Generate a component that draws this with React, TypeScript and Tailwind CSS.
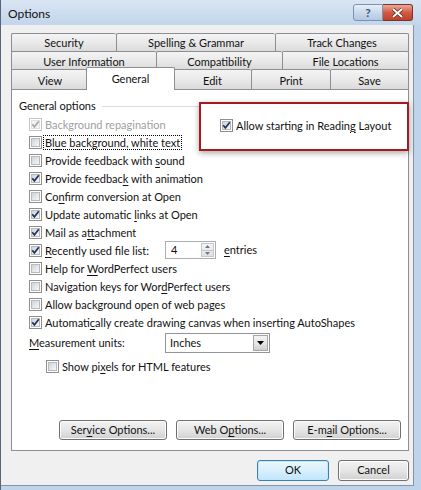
import React from "react";

const U = ({ children }: { children: React.ReactNode }) => (
  <span className="underline decoration-1 underline-offset-[2px]">{children}</span>
);

const Check = ({ checked, disabled }: { checked?: boolean; disabled?: boolean }) => (
  <span
    className={`relative flex h-[13px] w-[13px] shrink-0 items-center justify-center border bg-white ${
      disabled ? "border-[#c4c4c4]" : "border-[#8e8f8f]"
    }`}
  >
    <span
      className={`h-[9px] w-[9px] border ${
        disabled
          ? "border-[#e0e0e0] bg-[#f4f4f4]"
          : "border-[#b6bac0] bg-gradient-to-br from-[#cfd3d8] to-[#f7f7f7]"
      }`}
    />
    {checked && (
      <svg className="absolute left-[1px] top-[1px]" width="9" height="9" viewBox="0 0 9 9">
        <path
          d="M1.2 4.2 L3.4 6.8 L7.8 1.2"
          fill="none"
          stroke={disabled ? "#a8a8a8" : "#22345c"}
          strokeWidth="1.7"
        />
      </svg>
    )}
  </span>
);

const Row = ({
  children,
  checked,
  disabled,
  focus,
}: {
  children: React.ReactNode;
  checked?: boolean;
  disabled?: boolean;
  focus?: boolean;
}) => (
  <div className="flex h-[18px] items-center">
    <Check checked={checked} disabled={disabled} />
    <span
      className={`ml-px border px-[1px] leading-[13px] ${
        focus ? "border-dotted border-black" : "border-transparent"
      } ${disabled ? "text-[#a0a0a0]" : ""}`}
    >
      {children}
    </span>
  </div>
);

const Tab = ({
  children,
  w,
  last,
  pt = "pt-[1px]",
}: {
  children: React.ReactNode;
  w: string;
  last?: boolean;
  pt?: string;
}) => (
  <div
    className={`${w} ${pt} flex h-full items-start justify-center rounded-t-[2px] border-l border-t border-[#8c8e94] bg-gradient-to-b from-[#f4f4f4] via-[#e9e9e9] to-[#d9d9d9] ${
      last ? "border-r" : ""
    }`}
  >
    {children}
  </div>
);

const Btn = ({ children, w, primary }: { children: React.ReactNode; w: string; primary?: boolean }) => (
  <div
    className={`${w} flex items-center justify-center rounded-[3px] border ${
      primary
        ? "border-[#3c7fb1] bg-gradient-to-b from-[#eaf6fd] via-[#d9f0fc] to-[#bee6fd] shadow-[inset_0_0_0_1px_#c6e6f8]"
        : "border-[#707070] bg-gradient-to-b from-[#f2f2f2] via-[#e6e6e6] to-[#d0d0d0] shadow-[inset_0_0_0_1px_#fcfcfc]"
    }`}
  >
    {children}
  </div>
);

export default function App() {
  return (
    <div className="flex h-[490px] w-[421px] flex-col border-l border-[#56657a] bg-[#bfd3ea] font-['Lato',sans-serif] text-[11px] text-[#111]">
      {/* Title bar */}
      <div className="flex h-[25px] shrink-0 bg-gradient-to-b from-[#d9e5f3] to-[#c3d5eb] pl-[7px] pr-[8px]">
        <span className="pt-[5px] text-[12px]">Options</span>
        <div className="ml-auto flex pt-[4px]">
          <div className="flex h-[17px] w-[30px] items-center justify-center rounded-l-[3px] border border-[#7a92b0] bg-gradient-to-b from-[#e8eff8] via-[#cad9ec] to-[#b3c8e3] text-[12px] font-bold text-[#3b5679]">
            ?
          </div>
          <div className="flex h-[17px] w-[30px] items-center justify-center rounded-r-[3px] border border-l-0 border-[#7b3328] bg-gradient-to-b from-[#e9a99a] via-[#d25a42] to-[#c0402a]">
            <svg width="13" height="10" viewBox="0 0 13 10">
              <path d="M2 1 L11 9 M11 1 L2 9" stroke="#5a1d14" strokeWidth="3.2" />
              <path d="M2 1 L11 9 M11 1 L2 9" stroke="#ffffff" strokeWidth="2" />
            </svg>
          </div>
        </div>
      </div>

      {/* Body */}
      <div className="mb-[4px] mr-[7px] flex flex-1 flex-col border-b border-r border-[#8294aa] bg-[#f0f0f0] pl-[10px] pt-[8px]">
        {/* Tabs */}
        <div className="flex h-[19px] w-[398px]">
          <Tab w="w-[105px]">Security</Tab>
          <Tab w="w-[159px]">Spelling &amp; Grammar</Tab>
          <Tab w="w-[134px]" last>
            Track Changes
          </Tab>
        </div>
        <div className="-mt-px flex h-[19px] w-[398px]">
          <Tab w="w-[145px]" pt="pt-[2px]">
            User Information
          </Tab>
          <Tab w="w-[126px]" pt="pt-[2px]">
            Compatibility
          </Tab>
          <Tab w="w-[127px]" pt="pt-[2px]" last>
            File Locations
          </Tab>
        </div>
        <div className="-mt-px flex h-[21px] w-[398px] items-end">
          <Tab w="w-[77px]" pt="pt-[3px]">
            View
          </Tab>
          <div className="relative z-10 -mx-[2px] flex h-[23px] w-[89px] shrink-0 justify-center rounded-t-[2px] border-l border-r border-t border-[#8c8e94] bg-white pt-[3px]">
            General
          </div>
          <Tab w="w-[78px]" pt="pt-[3px]">
            Edit
          </Tab>
          <Tab w="w-[79px]" pt="pt-[3px]">
            Print
          </Tab>
          <Tab w="w-[79px]" pt="pt-[3px]" last>
            Save
          </Tab>
        </div>

        {/* Panel */}
        <div className="relative -mt-px flex h-[362px] w-[398px] flex-col border border-[#8c8e94] bg-white">
          <div className="mt-[8px] flex h-[17px] items-center pl-[7px] pr-[6px]">
            <span>General options</span>
            <div className="ml-[6px] h-px flex-1 bg-[#dcdcdc]" />
          </div>
          <div className="flex flex-col pl-[17px]">
            <Row checked disabled>
              Background repagination
            </Row>
            <Row focus>
              Bl<U>u</U>e background, white text
            </Row>
            <Row>
              Provide feedback with <U>s</U>ound
            </Row>
            <Row checked>
              Provide feedbac<U>k</U> with animation
            </Row>
            <Row>
              Co<U>n</U>firm conversion at Open
            </Row>
            <Row checked>
              Update automatic <U>l</U>inks at Open
            </Row>
            <Row checked>
              Mail as a<U>t</U>tachment
            </Row>
            <div className="flex h-[18px] items-center">
              <div className="w-[136px]">
                <Row checked>
                  <U>R</U>ecently used file list:
                </Row>
              </div>
              <div className="flex h-[18px] w-[51px] items-center border border-[#abadb3] bg-white">
                <span className="flex-1 pl-[5px]">4</span>
                <div className="mr-[1px] flex h-[14px] w-[13px] flex-col border border-[#c7c7c7] bg-gradient-to-b from-[#f5f5f5] to-[#e0e0e0]">
                  <div className="flex flex-1 items-center justify-center border-b border-[#c7c7c7]">
                    <svg width="5" height="3" viewBox="0 0 5 3">
                      <path d="M0 3 L2.5 0 L5 3 Z" fill="#6b7a90" />
                    </svg>
                  </div>
                  <div className="flex flex-1 items-center justify-center">
                    <svg width="5" height="3" viewBox="0 0 5 3">
                      <path d="M0 0 L2.5 3 L5 0 Z" fill="#6b7a90" />
                    </svg>
                  </div>
                </div>
              </div>
              <span className="ml-[8px]">
                <U>e</U>ntries
              </span>
            </div>
            <Row>
              Help for <U>W</U>ordPerfect users
            </Row>
            <Row>
              Navigation keys for Wor<U>d</U>Perfect users
            </Row>
            <Row>Allow background open of web pages</Row>
            <Row checked>
              Automati<U>c</U>ally create drawing canvas when inserting AutoShapes
            </Row>
            <div className="mt-[2px] flex h-[20px] items-center">
              <span className="w-[136px]">
                <U>M</U>easurement units:
              </span>
              <div className="flex h-[20px] w-[105px] items-center border border-[#8f959d] bg-white">
                <span className="flex-1 pl-[4px]">Inches</span>
                <div className="mr-[1px] flex h-[16px] w-[15px] items-center justify-center border border-[#a6a6a6] bg-gradient-to-b from-[#f4f4f4] via-[#e6e6e6] to-[#cfcfcf]">
                  <svg width="7" height="4" viewBox="0 0 7 4">
                    <path d="M0 0 L7 0 L3.5 4 Z" fill="#000" />
                  </svg>
                </div>
              </div>
            </div>
            <div className="mt-[4px] pl-[17px]">
              <Row>
                Show pi<U>x</U>els for HTML features
              </Row>
            </div>
          </div>

          <div className="mb-[10px] mt-auto flex h-[20px] justify-end gap-[9px] pr-[7px]">
            <Btn w="w-[108px]">
              Ser<U>v</U>ice Options...
            </Btn>
            <Btn w="w-[108px]">
              Web O<U>p</U>tions...
            </Btn>
            <Btn w="w-[108px]">
              E-m<U>a</U>il Options...
            </Btn>
          </div>

          {/* Annotation box */}
          <div className="absolute left-[187px] top-[12px] h-[49px] w-[210px] border-2 border-[#a31c22] bg-white pl-[19px] pt-[12px] shadow-[0_2px_6px_rgba(0,0,0,0.35)]">
            <Row checked>
              Allow starting in Readin<U>g</U> Layout
            </Row>
          </div>
        </div>

        {/* Dialog buttons */}
        <div className="mt-[9px] flex h-[21px] w-[398px] justify-end gap-[9px]">
          <Btn w="w-[72px]" primary>
            OK
          </Btn>
          <Btn w="w-[71px]">Cancel</Btn>
        </div>
      </div>
    </div>
  );
}
